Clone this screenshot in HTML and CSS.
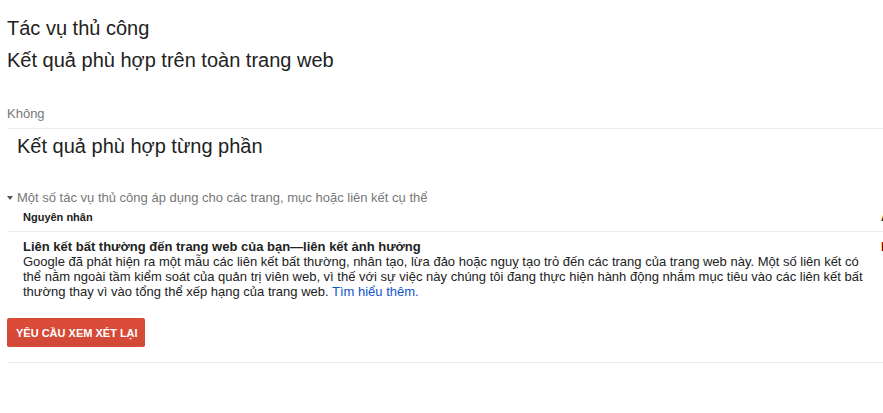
FILE: index.html
```html
<!DOCTYPE html>
<html lang="vi">
  <head>
    <meta charset="UTF-8" />
    <title>Tác vụ thủ công</title>
    <link rel="stylesheet" href="styles.css">
  </head>
  <body>
    <div class="page">
      <div class="page-header">
        <h1 class="page-title">Tác vụ thủ công</h1>
        <h2 class="page-title">Kết quả phù hợp trên toàn trang web</h2>
      </div>

      <div class="site-wide">Không</div>

      <h2 class="section-title">Kết quả phù hợp từng phần</h2>

      <div class="toggle">
        <span class="toggle-arrow"></span>
        Một số tác vụ thủ công áp dụng cho các trang, mục hoặc liên kết cụ thể
      </div>

      <table class="actions">
        <thead>
          <tr>
            <th class="col-reason">Nguyên nhân</th>
            <th class="col-affects">Ảnh hưởng</th>
          </tr>
        </thead>
        <tbody>
          <tr>
            <td class="col-reason">
              <div class="reason-title">Liên kết bất thường đến trang web của bạn—liên kết ảnh hưởng</div>
              Google đã phát hiện ra một mẫu các liên kết bất thường, nhân tạo, lừa đảo hoặc nguỵ tạo trỏ đến các trang của trang web này. Một số liên kết có thể nằm ngoài tầm kiểm soát của quản trị viên web, vì thế với sự việc này chúng tôi đang thực hiện hành động nhắm mục tiêu vào các liên kết bất thường thay vì vào tổng thể xếp hạng của trang web.
              <a href="#">Tìm hiểu thêm.</a>
            </td>
            <td class="col-affects"><span class="affects-tag">Một số liên kết đến</span></td>
          </tr>
        </tbody>
      </table>

      <div class="footer-actions">
        <button class="btn-red">Yêu cầu xem xét lại</button>
      </div>
    </div>
  </body>
</html>
```

FILE: styles.css
```css
html, body {
  margin: 0;
  padding: 0;
  background: #fff;
}

body {
  font-family: Arial, "Liberation Sans", sans-serif;
  font-size: 13px;
  color: #222;
  overflow: hidden;
}

.page {
  padding-left: 7px;
  width: 1100px;
}

.page-header {
  padding-top: 12px;
}

.page-title {
  margin: 0;
  font-size: 20px;
  font-weight: normal;
  line-height: 32px;
  color: #222;
}

.site-wide {
  margin-top: 30px;
  padding-bottom: 7px;
  line-height: 15px;
  color: #777;
  border-bottom: 1px solid #ebebeb;
  width: 876px;
}

.section-title {
  margin: 5px 0 0 10px;
  font-size: 20px;
  font-weight: normal;
  line-height: 24px;
  color: #222;
}

.toggle {
  margin-top: 32px;
  line-height: 15px;
  color: #777;
  display: flex;
  align-items: center;
  gap: 4px;
}

.toggle-arrow {
  width: 0;
  height: 0;
  border-left: 3.5px solid transparent;
  border-right: 3.5px solid transparent;
  border-top: 4px solid #555;
}

.actions {
  margin-top: 6px;
  border-collapse: collapse;
  table-layout: fixed;
}

.actions th {
  font-size: 11px;
  font-weight: bold;
  line-height: 13px;
  text-align: left;
  color: #222;
  padding: 0 0 7px;
  border-bottom: 1px solid #ebebeb;
}

.actions td {
  vertical-align: top;
  line-height: 15px;
  padding: 7px 0 0;
}

.actions .col-reason {
  width: 852px;
  padding-left: 16px;
  padding-right: 6px;
}

.actions .col-affects {
  width: 200px;
}

.reason-title {
  font-weight: bold;
}

.actions a {
  color: #15c;
  text-decoration: none;
}

.affects-tag {
  color: #800000;
  font-weight: bold;
}

.footer-actions {
  margin-top: 19px;
  padding-bottom: 15px;
  border-bottom: 1px solid #ebebeb;
  width: 876px;
}

.btn-red {
  display: block;
  height: 29px;
  padding: 0 6px 0 8px;
  border: 1px solid transparent;
  border-radius: 2px;
  background-color: #d14836;
  background-image: linear-gradient(#dd4b39, #d14836);
  color: #fff;
  font-family: Arial, "Liberation Sans", sans-serif;
  font-size: 11px;
  font-weight: bold;
  text-transform: uppercase;
}
```
